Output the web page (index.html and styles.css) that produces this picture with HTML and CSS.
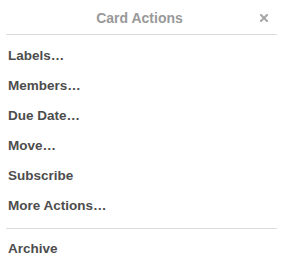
FILE: index.html
```html
<!DOCTYPE html>
<html lang="en">
<head>
    <meta charset="UTF-8">
    <meta name="viewport" content="width=device-width, initial-scale=1.0">
    <title>Card Actions</title>
    <link rel="stylesheet" href="styles.css">
</head>
<body>

<div class="popover">
    <div class="popover-header">
        <span class="popover-title">Card Actions</span>
        <a href="#" class="popover-close" title="Close">
            <svg width="8" height="8" viewBox="0 0 8 8">
                <path d="M1 1 L7 7 M7 1 L1 7" stroke="#a6a6a6" stroke-width="2" stroke-linecap="square"/>
            </svg>
        </a>
    </div>
    <ul class="actions">
        <li><a href="#">Labels…</a></li>
        <li><a href="#">Members…</a></li>
        <li><a href="#">Due Date…</a></li>
        <li><a href="#">Move…</a></li>
        <li><a href="#">Subscribe</a></li>
        <li><a href="#">More Actions…</a></li>
    </ul>
    <hr class="divider">
    <ul class="actions actions-last">
        <li><a href="#">Archive</a></li>
    </ul>
</div>

</body>
</html>
```

FILE: styles.css
```css
 body {
     font-family: "Liberation Sans", Arial, sans-serif;
     background-color: #fff;
     color: #4d4d4d;
     margin: 0;
 }

 .popover {
     width: 283px;
 }

 .popover-header {
     position: relative;
     margin: 0 6px;
     padding: 8px 0 6px;
     border-bottom: 1px solid #dcdcdc;
     text-align: center;
 }

 .popover-title {
     display: block;
     font-size: 14px;
     font-weight: bold;
     line-height: 20px;
     color: #999;
     padding-right: 4px;
 }

 .popover-close {
     position: absolute;
     top: 14px;
     right: 9px;
     width: 8px;
     height: 8px;
     display: block;
 }

 .popover-close svg {
     display: block;
 }

 .actions {
     list-style: none;
     margin: 0;
     padding: 6px 0 0;
 }

 .actions li a {
     display: block;
     padding: 5px 8px;
     font-size: 13.5px;
     font-weight: bold;
     line-height: 20px;
     color: #4d4d4d;
     text-decoration: none;
 }

 .actions li a:hover {
     background-color: #f0f0f0;
 }

 .divider {
     border: none;
     border-top: 1px solid #dcdcdc;
     margin: 7px 6px 0;
 }

 .actions-last {
     padding-top: 5px;
 }
```
